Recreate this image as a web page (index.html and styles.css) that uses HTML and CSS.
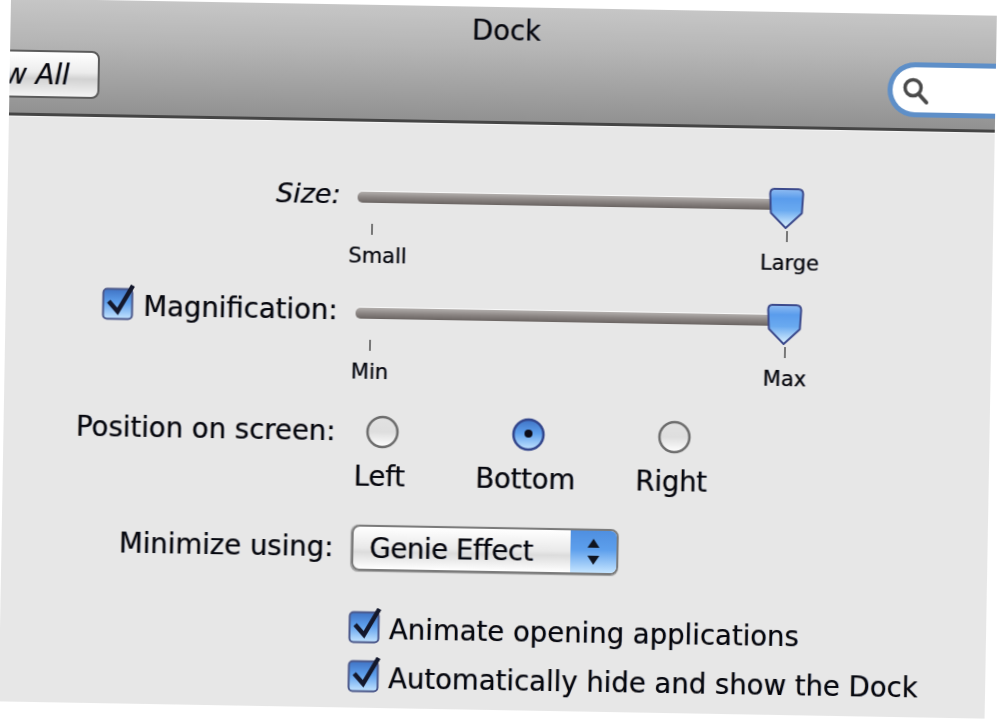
FILE: index.html
```html
<!DOCTYPE html>
<html lang="en">
<head>
<meta charset="utf-8">
<title>Dock</title>
<link rel="stylesheet" href="styles.css">
</head>
<body>
<svg class="defs" width="0" height="0" aria-hidden="true">
  <defs>
    <linearGradient id="aqua" x1="0" y1="0" x2="0" y2="1">
      <stop offset="0" stop-color="#3f72c4"/>
      <stop offset="0.45" stop-color="#5d9fec"/>
      <stop offset="1" stop-color="#c4e4ff"/>
    </linearGradient>
    <linearGradient id="aquaThumb" x1="0" y1="0" x2="0" y2="1">
      <stop offset="0" stop-color="#8fbcf2"/>
      <stop offset="0.25" stop-color="#5a9cec"/>
      <stop offset="0.55" stop-color="#6aaaf0"/>
      <stop offset="1" stop-color="#e0f4ff"/>
    </linearGradient>
    <linearGradient id="radioOff" x1="0" y1="0" x2="0" y2="1">
      <stop offset="0" stop-color="#e2e2e2"/>
      <stop offset="0.5" stop-color="#dedede"/>
      <stop offset="1" stop-color="#ffffff"/>
    </linearGradient>
    <symbol id="thumb" viewBox="0 0 36 43">
      <path d="M6 2 H30 Q35 2 35 7 L34 26 L18 41 L3 26 L2 7 Q2 2 6 2 Z" fill="url(#aquaThumb)" stroke="#3c4a8c" stroke-width="2" stroke-linejoin="round"/>
    </symbol>
    <symbol id="check" viewBox="0 0 33 36">
      <rect x="1.500" y="4.500" width="29" height="30" rx="4" fill="url(#aqua)" stroke="#4d5a8c" stroke-width="2"/>
      <path d="M7 17 L16 27 L31 1" fill="none" stroke="#14182c" stroke-width="4.500"/>
    </symbol>
    <symbol id="radio" viewBox="0 0 34 34">
      <circle cx="17" cy="17" r="15" fill="url(#radioOff)" stroke="#6d6d6d" stroke-width="2.500"/>
    </symbol>
    <symbol id="radioOn" viewBox="0 0 34 34">
      <circle cx="17" cy="17" r="15" fill="url(#aqua)" stroke="#33468c" stroke-width="2.500"/>
      <circle cx="17" cy="16" r="4" fill="#0c0c18"/>
    </symbol>
  </defs>
</svg>

<main class="window">
  <header class="toolbar">
    <button class="show-all" type="button">Show All</button>
    <h1 class="title">Dock</h1>
    <div class="search">
      <svg class="search-icon" viewBox="0 0 28 30" aria-hidden="true">
        <circle cx="11.500" cy="11.500" r="8" fill="none" stroke="#4a4a4a" stroke-width="3.500"/>
        <path d="M17 17.500 L25 26" stroke="#4a4a4a" stroke-width="4" stroke-linecap="round"/>
      </svg>
    </div>
  </header>

  <section class="form">
    <div class="row">
      <label class="label label-slider label-size">Size:</label>
      <div class="slider">
        <div class="track"></div>
        <svg class="thumb"><use href="#thumb"/></svg>
        <div class="ticks">
          <div class="tick-item tick-first"><i class="tick"></i><span class="shift-small">Small</span></div>
          <div class="tick-item tick-last"><i class="tick"></i><span class="shift-large">Large</span></div>
        </div>
      </div>
    </div>

    <div class="row">
      <label class="label label-slider"><svg class="check check-inline"><use href="#check"/></svg>Magnification:</label>
      <div class="slider">
        <div class="track"></div>
        <svg class="thumb"><use href="#thumb"/></svg>
        <div class="ticks">
          <div class="tick-item tick-first"><i class="tick"></i><span>Min</span></div>
          <div class="tick-item tick-last"><i class="tick"></i><span>Max</span></div>
        </div>
      </div>
    </div>

    <div class="row row-position">
      <label class="label">Position on screen:</label>
      <div class="radios">
        <div class="radio-item"><svg class="radio"><use href="#radio"/></svg><span class="radio-text">Left</span></div>
        <div class="radio-item"><svg class="radio"><use href="#radioOn"/></svg><span class="radio-text">Bottom</span></div>
        <div class="radio-item"><svg class="radio"><use href="#radio"/></svg><span class="radio-text">Right</span></div>
      </div>
    </div>

    <div class="row row-min">
      <label class="label label-min">Minimize using:</label>
      <div class="popup">
        <span class="popup-text">Genie Effect</span>
        <span class="stepper">
          <svg viewBox="0 0 16 30" aria-hidden="true">
            <path d="M8 2 L14 11 H2 Z M8 28 L2 19 H14 Z" fill="#10141f"/>
          </svg>
        </span>
      </div>
    </div>

    <div class="row row-check">
      <span></span>
      <label class="check-line"><svg class="check"><use href="#check"/></svg><span class="check-text">Animate opening applications</span></label>
    </div>
    <div class="row row-check">
      <span></span>
      <label class="check-line"><svg class="check"><use href="#check"/></svg><span class="check-text">Automatically hide and show the Dock</span></label>
    </div>
  </section>
</main>
</body>
</html>
```

FILE: styles.css
```css
* { box-sizing: border-box; }

html, body {
  margin: 0;
  height: 100%;
  background: #fff;
  overflow: hidden;
}

.defs { position: absolute; }

.window {
  width: 986px;
  height: 703px;
  overflow: hidden;
  background: #e7e7e7;
  color: #05070f;
  font-family: "DejaVu Sans", sans-serif;
  font-size: 27.5px;
  text-shadow: -0.7px 0 rgba(170, 90, 0, 0.35), 0.7px 0 rgba(0, 70, 170, 0.35);
  transform-origin: 0 0;
  transform: translate(11px, -1.5px) rotate(1deg);
  filter: blur(0.65px);
}

/* Toolbar */
.toolbar {
  display: grid;
  grid-template-columns: 1fr auto 1fr;
  height: 117px;
  background: linear-gradient(#c6c6c6 0%, #b6b6b6 35%, #919191 100%);
  border-bottom: 3px solid #454545;
  box-shadow: 0 1px 0 #f6f6f6;
  position: relative;
}

.show-all {
  justify-self: start;
  align-self: start;
  margin: 51px 0 0 -70px;
  width: 160px;
  height: 48px;
  padding: 0 28px 0 0;
  font: italic 27.5px "DejaVu Sans", sans-serif;
  text-align: right;
  white-space: nowrap;
  color: #05070f;
  text-shadow: inherit;
  background: linear-gradient(#ffffff 0%, #ececec 45%, #d2d2d2 60%, #f4f4f4 100%);
  border: 2px solid #5b5b5b;
  border-radius: 8px;
}

.title {
  margin: 7px 0 0;
  align-self: start;
  font-size: 27.5px;
  font-weight: 400;
  line-height: 32px;
  transform: translateX(3px);
}

.search {
  justify-self: end;
  align-self: start;
  margin: 48px 0 0;
  width: 108px;
  height: 55px;
  padding: 9px 0 0 9px;
  background: #fff;
  border: 5px solid #5e8fc8;
  border-right: 0;
  border-radius: 28px 0 0 28px;
}

.search-icon {
  display: block;
  width: 28px;
  height: 30px;
}

/* Form rows */
.form {
  padding-top: 61px;
}

.row {
  display: grid;
  grid-template-columns: 332px 1fr;
  column-gap: 18px;
}

.label {
  display: flex;
  align-items: center;
  justify-content: flex-end;
  height: 32px;
  line-height: 32px;
  white-space: nowrap;
}

.label-slider { margin-top: -5px; }
.label-min { margin-top: 6px; }

.label-size {
  margin-top: -4px;
  margin-right: -1px;
  font-style: italic;
  font-size: 27px;
}

/* Sliders */
.slider {
  position: relative;
  width: 462px;
  height: 116px;
}

.track {
  width: 434px;
  height: 11px;
  margin-top: 9px;
  background: linear-gradient(#b2aeac 0%, #8b8583 50%, #6a6462 100%);
  border-radius: 5px;
  box-shadow: 0 -1px 0 #f8f8f8;
}

.thumb {
  position: absolute;
  left: 410px;
  top: -3px;
  width: 37px;
  height: 43px;
}

.ticks {
  display: flex;
  justify-content: space-between;
  width: 470px;
  margin-top: 21px;
  font-size: 21px;
  line-height: 26px;
}

.tick-item {
  display: flex;
  flex-direction: column;
  align-items: center;
  width: 80px;
}

.tick-first { margin-left: -25px; }

.shift-small { margin-left: 12px; }
.shift-large { margin-left: 6px; }

.tick {
  display: block;
  width: 2px;
  height: 11px;
  margin-bottom: 8px;
  background: #777;
}

/* Radios */
.radios {
  display: flex;
}

.radio-item {
  display: flex;
  flex-direction: column;
  align-items: center;
  width: 146px;
  margin-left: -44px;
  margin-right: 44px;
  line-height: 32px;
}

.radio-text {
  margin-right: 5px;
  letter-spacing: -0.2px;
}

.radio {
  display: block;
  width: 34px;
  height: 34px;
  margin-bottom: 11px;
}

/* Popup */
.popup {
  display: flex;
  width: 267px;
  height: 46px;
  border: 2px solid #7b7b7b;
  border-radius: 8px;
  overflow: hidden;
  background: linear-gradient(#ffffff 0%, #e9e9e9 50%, #dcdcdc 60%, #ffffff 100%);
  box-shadow: 0 1px 1px #999;
}

.popup-text {
  flex: 1;
  padding-left: 16px;
  line-height: 43px;
  letter-spacing: -0.4px;
  white-space: nowrap;
}

.stepper {
  display: flex;
  align-items: center;
  justify-content: center;
  width: 46px;
  background: linear-gradient(#4f8fe0 0%, #5d9fec 45%, #c4e4ff 100%);
}

.stepper svg {
  width: 16px;
  height: 30px;
}

/* Checkboxes */
.check {
  display: block;
  flex: none;
  width: 33px;
  height: 36px;
}

.check-inline {
  margin-right: 9px;
  margin-bottom: 6px;
}

.check-line {
  display: flex;
  align-items: flex-start;
  gap: 8px;
  margin-left: -2px;
  white-space: nowrap;
}

.check-text {
  margin-top: 5px;
  line-height: 32px;
}

.row-position { height: 110px; }
.row-min { height: 83px; }
.row-check { height: 49px; }
```
